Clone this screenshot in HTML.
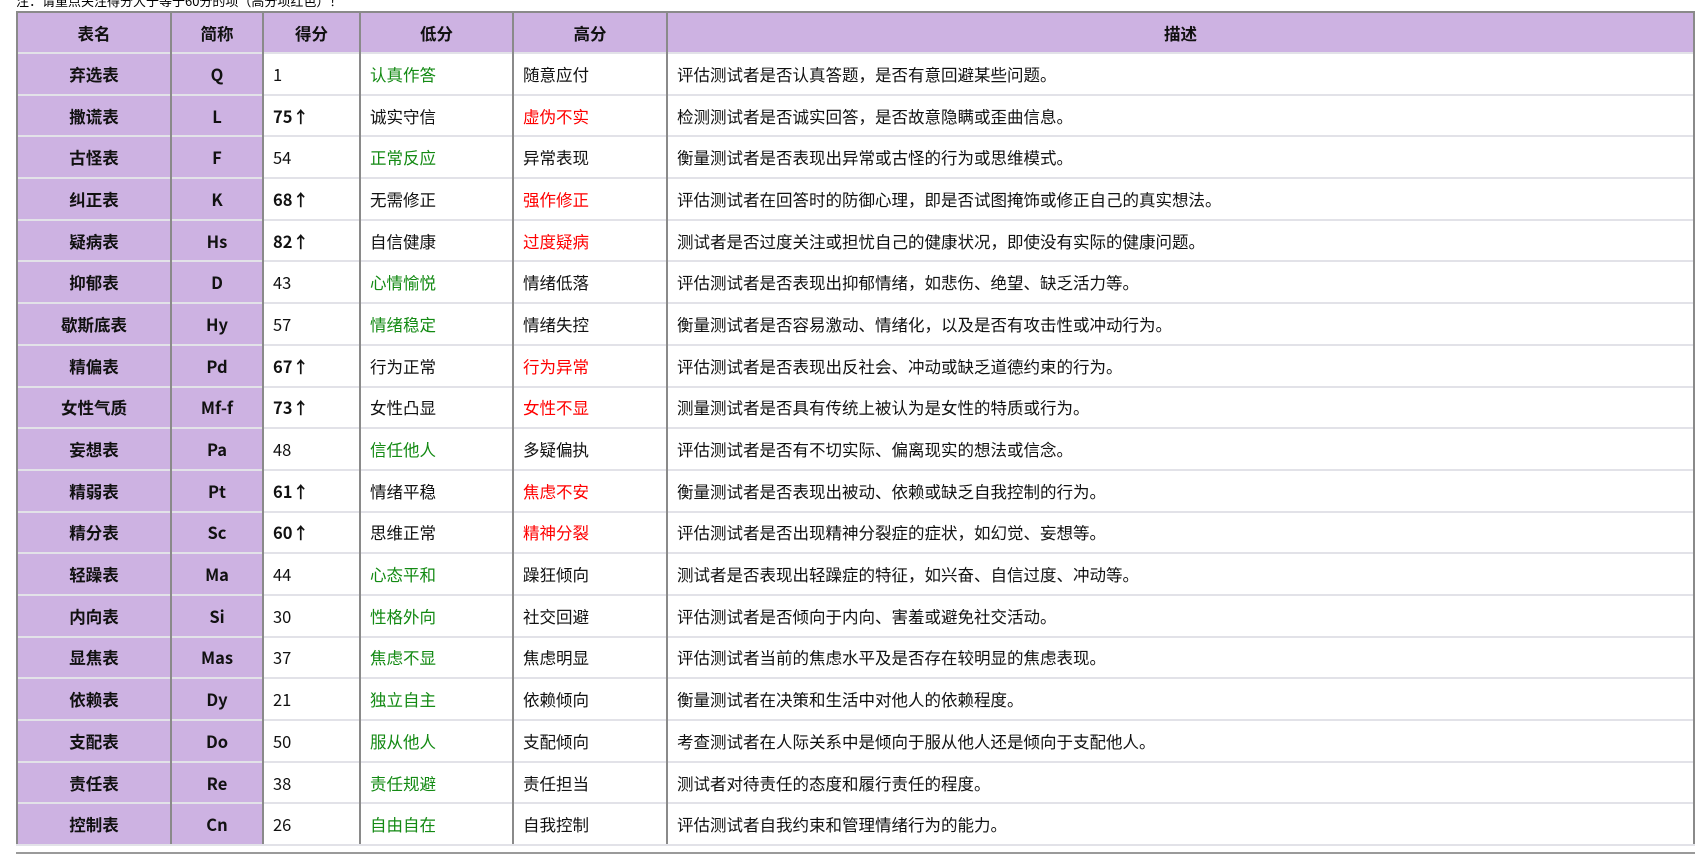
<!DOCTYPE html>
<html><head><meta charset="utf-8"><style>
body{margin:0;background:#fff;width:1702px;height:859px;overflow:hidden;position:relative;font-family:"Noto Sans CJK SC",sans-serif;}
.note{position:absolute;left:16px;top:-9px;font-size:13px;color:#000;}
table{position:absolute;left:16px;top:11px;width:1679px;border-collapse:collapse;table-layout:fixed;font-size:16.5px;color:#111;}
td,th{height:41.7px;padding:0 0 0 9px;box-sizing:border-box;border-top:2px solid #e2e2e8;border-left:2px solid #8a8a8a;white-space:nowrap;overflow:hidden;vertical-align:middle;line-height:20px;}
th{background:#cdb2e2;font-weight:bold;text-align:center;padding:0;height:41px;border-top:2px solid #8a8a8a;}
td.h{background:#cdb2e2;font-weight:bold;text-align:center;padding:0;}
tr td:last-child,tr th:last-child{border-right:2px solid #8a8a8a;}
tr:last-child td{border-bottom:2px solid #e2e2e8;}
.b{font-weight:bold}.g{color:#138a13}.r{color:#ff0000}
.line{position:absolute;left:16px;top:852px;width:1679px;height:2px;background:#9a9a9a;}
</style></head><body>
<div class="note">注：请重点关注得分大于等于60分的项（高分项红色）！</div>
<table>
<colgroup><col style="width:154px"><col style="width:92px"><col style="width:97px"><col style="width:153px"><col style="width:154px"><col></colgroup>
<tr><th>表名</th><th>简称</th><th>得分</th><th>低分</th><th>高分</th><th>描述</th></tr>
<tr><td class="h">弃选表</td><td class="h">Q</td><td>1</td><td class="g">认真作答</td><td>随意应付</td><td>评估测试者是否认真答题，是否有意回避某些问题。</td></tr>
<tr><td class="h">撒谎表</td><td class="h">L</td><td class="b">75↑</td><td>诚实守信</td><td class="r">虚伪不实</td><td>检测测试者是否诚实回答，是否故意隐瞒或歪曲信息。</td></tr>
<tr><td class="h">古怪表</td><td class="h">F</td><td>54</td><td class="g">正常反应</td><td>异常表现</td><td>衡量测试者是否表现出异常或古怪的行为或思维模式。</td></tr>
<tr><td class="h">纠正表</td><td class="h">K</td><td class="b">68↑</td><td>无需修正</td><td class="r">强作修正</td><td>评估测试者在回答时的防御心理，即是否试图掩饰或修正自己的真实想法。</td></tr>
<tr><td class="h">疑病表</td><td class="h">Hs</td><td class="b">82↑</td><td>自信健康</td><td class="r">过度疑病</td><td>测试者是否过度关注或担忧自己的健康状况，即使没有实际的健康问题。</td></tr>
<tr><td class="h">抑郁表</td><td class="h">D</td><td>43</td><td class="g">心情愉悦</td><td>情绪低落</td><td>评估测试者是否表现出抑郁情绪，如悲伤、绝望、缺乏活力等。</td></tr>
<tr><td class="h">歇斯底表</td><td class="h">Hy</td><td>57</td><td class="g">情绪稳定</td><td>情绪失控</td><td>衡量测试者是否容易激动、情绪化，以及是否有攻击性或冲动行为。</td></tr>
<tr><td class="h">精偏表</td><td class="h">Pd</td><td class="b">67↑</td><td>行为正常</td><td class="r">行为异常</td><td>评估测试者是否表现出反社会、冲动或缺乏道德约束的行为。</td></tr>
<tr><td class="h">女性气质</td><td class="h">Mf-f</td><td class="b">73↑</td><td>女性凸显</td><td class="r">女性不显</td><td>测量测试者是否具有传统上被认为是女性的特质或行为。</td></tr>
<tr><td class="h">妄想表</td><td class="h">Pa</td><td>48</td><td class="g">信任他人</td><td>多疑偏执</td><td>评估测试者是否有不切实际、偏离现实的想法或信念。</td></tr>
<tr><td class="h">精弱表</td><td class="h">Pt</td><td class="b">61↑</td><td>情绪平稳</td><td class="r">焦虑不安</td><td>衡量测试者是否表现出被动、依赖或缺乏自我控制的行为。</td></tr>
<tr><td class="h">精分表</td><td class="h">Sc</td><td class="b">60↑</td><td>思维正常</td><td class="r">精神分裂</td><td>评估测试者是否出现精神分裂症的症状，如幻觉、妄想等。</td></tr>
<tr><td class="h">轻躁表</td><td class="h">Ma</td><td>44</td><td class="g">心态平和</td><td>躁狂倾向</td><td>测试者是否表现出轻躁症的特征，如兴奋、自信过度、冲动等。</td></tr>
<tr><td class="h">内向表</td><td class="h">Si</td><td>30</td><td class="g">性格外向</td><td>社交回避</td><td>评估测试者是否倾向于内向、害羞或避免社交活动。</td></tr>
<tr><td class="h">显焦表</td><td class="h">Mas</td><td>37</td><td class="g">焦虑不显</td><td>焦虑明显</td><td>评估测试者当前的焦虑水平及是否存在较明显的焦虑表现。</td></tr>
<tr><td class="h">依赖表</td><td class="h">Dy</td><td>21</td><td class="g">独立自主</td><td>依赖倾向</td><td>衡量测试者在决策和生活中对他人的依赖程度。</td></tr>
<tr><td class="h">支配表</td><td class="h">Do</td><td>50</td><td class="g">服从他人</td><td>支配倾向</td><td>考查测试者在人际关系中是倾向于服从他人还是倾向于支配他人。</td></tr>
<tr><td class="h">责任表</td><td class="h">Re</td><td>38</td><td class="g">责任规避</td><td>责任担当</td><td>测试者对待责任的态度和履行责任的程度。</td></tr>
<tr><td class="h">控制表</td><td class="h">Cn</td><td>26</td><td class="g">自由自在</td><td>自我控制</td><td>评估测试者自我约束和管理情绪行为的能力。</td></tr>
</table>
<div class="line"></div>
</body></html>
